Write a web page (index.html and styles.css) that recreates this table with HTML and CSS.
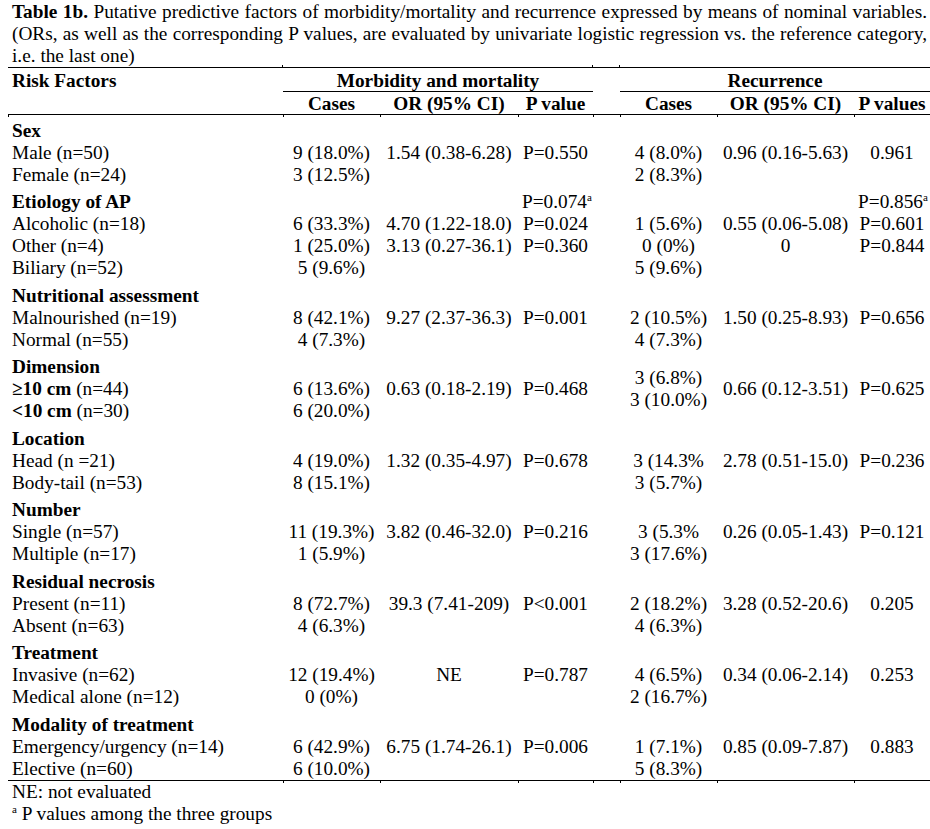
FILE: index.html
```
<!DOCTYPE html>
<html lang="en">
<head>
<meta charset="utf-8">
<title>Table 1b</title>
<link rel="stylesheet" href="styles.css">
</head>
<body>
<div class="page">
  <p class="caption"><b>Table 1b.</b> Putative predictive factors of morbidity/mortality and recurrence expressed by means of nominal variables. (ORs, as well as the corresponding P values, are evaluated by univariate logistic regression vs. the reference category, i.e. the last one)</p>
  <table class="data">
    <colgroup>
      <col class="c-risk"><col class="c-cases"><col class="c-or"><col class="c-p"><col class="c-gap"><col class="c-cases"><col class="c-or2"><col class="c-p2">
    </colgroup>
    <thead>
      <tr class="h1">
        <th class="lbl tk-top-r">Risk Factors</th>
        <th colspan="3" class="grp-h tk-top-r">Morbidity and mortality</th>
        <th class="tk-top-r"></th>
        <th colspan="3" class="grp-h">Recurrence</th>
      </tr>
      <tr class="h2">
        <th class="tk"></th>
        <th class="tk">Cases</th>
        <th class="tk">OR (95% CI)</th>
        <th class="tk">P value</th>
        <th class="tk"></th>
        <th class="tk">Cases</th>
        <th class="tk">OR (95% CI)</th>
        <th class="tk">P values</th>
      </tr>
    </thead>
    <tbody class="first">
      <tr class="cat"><td class="lbl"><b>Sex</b></td><td></td><td></td><td></td><td></td><td></td><td></td><td></td></tr>
      <tr><td class="lbl">Male (n=50)</td><td>9 (18.0%)</td><td>1.54 (0.38-6.28)</td><td>P=0.550</td><td></td><td>4 (8.0%)</td><td>0.96 (0.16-5.63)</td><td>0.961</td></tr>
      <tr><td class="lbl">Female (n=24)</td><td>3 (12.5%)</td><td></td><td></td><td></td><td>2 (8.3%)</td><td></td><td></td></tr>
    </tbody>
    <tbody>
      <tr class="cat"><td class="lbl"><b>Etiology of AP</b></td><td></td><td></td><td>P=0.074<sup>a</sup></td><td></td><td></td><td></td><td>P=0.856<sup>a</sup></td></tr>
      <tr><td class="lbl">Alcoholic (n=18)</td><td>6 (33.3%)</td><td>4.70 (1.22-18.0)</td><td>P=0.024</td><td></td><td>1 (5.6%)</td><td>0.55 (0.06-5.08)</td><td>P=0.601</td></tr>
      <tr><td class="lbl">Other (n=4)</td><td>1 (25.0%)</td><td>3.13 (0.27-36.1)</td><td>P=0.360</td><td></td><td>0 (0%)</td><td>0</td><td>P=0.844</td></tr>
      <tr><td class="lbl">Biliary (n=52)</td><td>5 (9.6%)</td><td></td><td></td><td></td><td>5 (9.6%)</td><td></td><td></td></tr>
    </tbody>
    <tbody>
      <tr class="cat"><td class="lbl"><b>Nutritional assessment</b></td><td></td><td></td><td></td><td></td><td></td><td></td><td></td></tr>
      <tr><td class="lbl">Malnourished (n=19)</td><td>8 (42.1%)</td><td>9.27 (2.37-36.3)</td><td>P=0.001</td><td></td><td>2 (10.5%)</td><td>1.50 (0.25-8.93)</td><td>P=0.656</td></tr>
      <tr><td class="lbl">Normal (n=55)</td><td>4 (7.3%)</td><td></td><td></td><td></td><td>4 (7.3%)</td><td></td><td></td></tr>
    </tbody>
    <tbody>
      <tr class="cat"><td class="lbl"><b>Dimension</b></td><td></td><td></td><td></td><td></td><td rowspan="3" class="stack">3 (6.8%)<br>3 (10.0%)</td><td></td><td></td></tr>
      <tr><td class="lbl"><b>≥10 cm</b> (n=44)</td><td>6 (13.6%)</td><td>0.63 (0.18-2.19)</td><td>P=0.468</td><td></td><td>0.66 (0.12-3.51)</td><td>P=0.625</td></tr>
      <tr><td class="lbl"><b>&lt;10 cm</b> (n=30)</td><td>6 (20.0%)</td><td></td><td></td><td></td><td></td><td></td></tr>
    </tbody>
    <tbody>
      <tr class="cat"><td class="lbl"><b>Location</b></td><td></td><td></td><td></td><td></td><td></td><td></td><td></td></tr>
      <tr><td class="lbl">Head (n =21)</td><td>4 (19.0%)</td><td>1.32 (0.35-4.97)</td><td>P=0.678</td><td></td><td>3 (14.3%</td><td>2.78 (0.51-15.0)</td><td>P=0.236</td></tr>
      <tr><td class="lbl">Body-tail (n=53)</td><td>8 (15.1%)</td><td></td><td></td><td></td><td>3 (5.7%)</td><td></td><td></td></tr>
    </tbody>
    <tbody>
      <tr class="cat"><td class="lbl"><b>Number</b></td><td></td><td></td><td></td><td></td><td></td><td></td><td></td></tr>
      <tr><td class="lbl">Single (n=57)</td><td>11 (19.3%)</td><td>3.82 (0.46-32.0)</td><td>P=0.216</td><td></td><td>3 (5.3%</td><td>0.26 (0.05-1.43)</td><td>P=0.121</td></tr>
      <tr><td class="lbl">Multiple (n=17)</td><td>1 (5.9%)</td><td></td><td></td><td></td><td>3 (17.6%)</td><td></td><td></td></tr>
    </tbody>
    <tbody>
      <tr class="cat"><td class="lbl"><b>Residual necrosis</b></td><td></td><td></td><td></td><td></td><td></td><td></td><td></td></tr>
      <tr><td class="lbl">Present (n=11)</td><td>8 (72.7%)</td><td>39.3 (7.41-209)</td><td>P&lt;0.001</td><td></td><td>2 (18.2%)</td><td>3.28 (0.52-20.6)</td><td>0.205</td></tr>
      <tr><td class="lbl">Absent (n=63)</td><td>4 (6.3%)</td><td></td><td></td><td></td><td>4 (6.3%)</td><td></td><td></td></tr>
    </tbody>
    <tbody>
      <tr class="cat"><td class="lbl"><b>Treatment</b></td><td></td><td></td><td></td><td></td><td></td><td></td><td></td></tr>
      <tr><td class="lbl">Invasive (n=62)</td><td>12 (19.4%)</td><td>NE</td><td>P=0.787</td><td></td><td>4 (6.5%)</td><td>0.34 (0.06-2.14)</td><td>0.253</td></tr>
      <tr><td class="lbl">Medical alone (n=12)</td><td>0 (0%)</td><td></td><td></td><td></td><td>2 (16.7%)</td><td></td><td></td></tr>
    </tbody>
    <tbody class="last">
      <tr class="cat"><td class="lbl"><b>Modality of treatment</b></td><td></td><td></td><td></td><td></td><td></td><td></td><td></td></tr>
      <tr><td class="lbl">Emergency/urgency (n=14)</td><td>6 (42.9%)</td><td>6.75 (1.74-26.1)</td><td>P=0.006</td><td></td><td>1 (7.1%)</td><td>0.85 (0.09-7.87)</td><td>0.883</td></tr>
      <tr class="end"><td class="lbl tk">Elective (n=60)</td><td class="tk">6 (10.0%)</td><td class="tk"></td><td class="tk"></td><td class="tk"></td><td class="tk">5 (8.3%)</td><td class="tk"></td><td class="tk"></td></tr>
    </tbody>
  </table>
  <p class="note">NE: not evaluated</p>
  <p class="note"><sup>a</sup> P values among the three groups</p>
</div>
</body>
</html>
```

FILE: styles.css
```
html, body {
  margin: 0;
  padding: 0;
  background: #ffffff;
}

body {
  font-family: "Liberation Serif", "Times New Roman", serif;
  font-size: 19.3px;
  line-height: 22px;
  color: #000000;
}

.page {
  padding: 1px 0 0 8px;
  width: 922px;
}

.caption {
  margin: 0;
  padding: 0 3px 0 4px;
  text-align: justify;
}

.note {
  margin: 0;
  padding: 0 4px;
}

.note:first-of-type {
  margin-top: -1px;
}

sup {
  font-size: 11px;
  line-height: 0;
  vertical-align: 7px;
}

.data {
  border-collapse: collapse;
  table-layout: fixed;
  width: 922px;
  border-top: 1px solid #000;
}

.c-risk { width: 275px; }
.c-cases { width: 97px; }
.c-or { width: 138px; }
.c-p { width: 75px; }
.c-gap { width: 27px; }
.c-or2 { width: 137px; }
.c-p2 { width: 76px; }

.data th,
.data td {
  padding: 0 4px;
  white-space: nowrap;
  text-align: center;
  vertical-align: middle;
  position: relative;
}

.data th {
  font-weight: bold;
}

.data thead .h1 th {
  padding-top: 2px;
  line-height: 21px;
}

.data thead .h2 th {
  padding-top: 1px;
  line-height: 21px;
  border-bottom: 1px solid #000;
}

.data .lbl {
  text-align: left;
}

.data .grp-h {
  border-bottom: 1px solid #000;
}

.data tr.cat td {
  padding-top: 5.5px;
}

.data tbody.first tr.cat td {
  padding-top: 4.5px;
}

.data td.stack {
  vertical-align: middle;
}

.data tr.end td {
  border-bottom: 1px solid #000;
}

/* small column notches below rules, as in the printed table */
.data .tk::after {
  content: "";
  position: absolute;
  left: 0;
  bottom: -3px;
  width: 1px;
  height: 3px;
  background: #000;
}

.data .lbl.tk::after {
  display: none;
}

.data .tk-top-r::before {
  content: "";
  position: absolute;
  right: 0;
  top: -3px;
  width: 1px;
  height: 2px;
  background: #000;
}
```
